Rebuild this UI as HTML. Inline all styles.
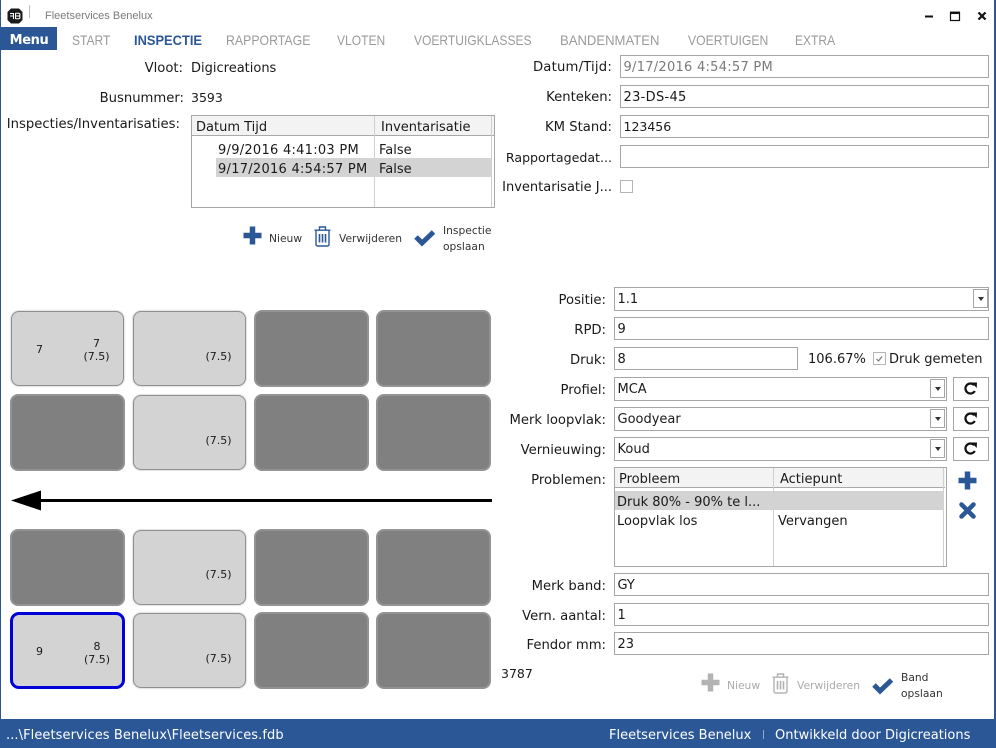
<!DOCTYPE html>
<html><head><meta charset="utf-8"><style>
*{box-sizing:border-box}
html,body{margin:0;padding:0;width:996px;height:748px;overflow:hidden;background:#fff}
body{position:relative;font:13px "DejaVu Sans",sans-serif;color:#1a1a1a}
.t{position:absolute;white-space:nowrap;line-height:18px}
.r{position:absolute;white-space:nowrap;line-height:18px;text-align:right;font-size:13.2px}
.f{position:absolute;border:1px solid #a6a6a6;background:#fff;line-height:22px;padding:1px 0 0 2.5px;white-space:nowrap}
.n{position:absolute;top:32px;font:14px/16px "Liberation Sans",sans-serif;color:#9a9a9a;white-space:nowrap;transform:scaleX(.86);transform-origin:0 0}
.b{position:absolute;width:113px;height:75px;border-radius:8px;background:#d3d3d3;border:1.5px solid #8f8f8f;box-shadow:0 0 1px 1px #e2e2e2;font-size:11px}
.d{background:#808080;border:2px solid #939393;box-shadow:none;width:115px;height:77px}
.b span{position:absolute;white-space:nowrap;line-height:13px;text-align:center}
.dd{position:absolute;width:15px;height:19px;border:1px solid #a6a6a6;background:#fff}
.dd:after{content:"";position:absolute;left:4px;top:7px;border:3px solid transparent;border-top:4px solid #333;border-bottom:0}
.s{position:absolute;font-size:10.7px;line-height:18px;white-space:nowrap;color:#333}
.rb{position:absolute;left:953px;width:36px;height:24px;border:1px solid #a6a6a6;background:#fff}
.dt{letter-spacing:.27px}
svg{position:absolute;overflow:visible}
</style></head><body>

<!-- window edges -->
<div style="position:absolute;left:0;top:0;width:1px;height:748px;background:#2b5797"></div>
<div style="position:absolute;right:0;top:0;width:2px;height:748px;background:#2b5797"></div>

<!-- title -->
<svg style="left:7px;top:8px" width="16" height="16" viewBox="0 0 16 16"><path d="M4 .5h8L15.500 4v8L12 15.500H4L.5 12V4z" fill="#1b1b1b"/><path d="M3 5.500h3.500M3 8h3.500M6.500 5v6M8.500 5v6M8.500 5.200h3q1.500 0 1.500 1.400t-1.500 1.400h-3M8.500 8h3q1.500 0 1.500 1.400t-1.500 1.400h-3" stroke="#fff" stroke-width="1" fill="none"/></svg>
<div style="position:absolute;left:29px;top:5px;width:1px;height:13px;background:#bdbdbd"></div>
<div class="t" style="left:45px;top:8px;font:11px/16px 'Liberation Sans',sans-serif;color:#7b7b7b">Fleetservices Benelux</div>
<svg style="left:924px;top:10px" width="66" height="14" viewBox="0 0 66 14">
<path d="M1 6.500h8" stroke="#111" stroke-width="2"/>
<path d="M26.500 2.500h9v8h-9z" stroke="#111" stroke-width="1.200" fill="none"/><path d="M26 2.800h10" stroke="#111" stroke-width="2.500"/>
<path d="M54.500 2.500l7 7M61.500 2.500l-7 7" stroke="#111" stroke-width="2.200"/></svg>

<!-- nav -->
<div style="position:absolute;left:1px;top:27px;width:56px;height:23px;background:#2b5797;color:#fff;font:bold 13px/27px 'DejaVu Sans',sans-serif;text-align:center;letter-spacing:-.4px">Menu</div>
<div class="n" style="left:72px">START</div>
<div class="n" style="left:134px;color:#2b5797;font-weight:bold;transform:scaleX(.92)">INSPECTIE</div>
<div class="n" style="left:226px;transform:scaleX(.88)">RAPPORTAGE</div>
<div class="n" style="left:337px">VLOTEN</div>
<div class="n" style="left:414px">VOERTUIGKLASSES</div>
<div class="n" style="left:560px;transform:scaleX(.935)">BANDENMATEN</div>
<div class="n" style="left:688px;transform:scaleX(.87)">VOERTUIGEN</div>
<div class="n" style="left:795px">EXTRA</div>

<!-- top left -->
<div class="r" style="right:813px;top:60px">Vloot:</div>
<div class="t" style="left:191px;top:60px">Digicreations</div>
<div class="r" style="right:812px;top:90px">Busnummer:</div>
<div class="t" style="left:191px;top:90px;font-size:12.500px;line-height:16px">3593</div>
<div class="r" style="right:816px;top:116px">Inspecties/Inventarisaties:</div>

<div style="position:absolute;left:191px;top:115px;width:304px;height:93px;border:1px solid #a6a6a6;background:#fff"></div>
<div style="position:absolute;left:192px;top:116px;width:302px;height:20px;background:#f3f3f3;border-bottom:1px solid #a9a9a9"></div>
<div style="position:absolute;left:374px;top:116px;width:1px;height:91px;background:#cfcfcf"></div>
<div style="position:absolute;left:491px;top:116px;width:1px;height:91px;background:#cfcfcf"></div>
<div style="position:absolute;left:216px;top:158px;width:276px;height:19px;background:#d3d3d3"></div>
<div class="t" style="left:196px;top:119px">Datum Tijd</div>
<div class="t" style="left:381px;top:119px">Inventarisatie</div>
<div class="t dt" style="left:218px;top:142px">9/9/2016 4:41:03 PM</div>
<div class="t" style="left:379px;top:142px">False</div>
<div class="t dt" style="left:218px;top:161px">9/17/2016 4:54:57 PM</div>
<div class="t" style="left:379px;top:161px">False</div>

<!-- top actions -->
<svg style="left:243px;top:226px" width="19" height="19" viewBox="0 0 19 19"><path d="M9.500 .5v18M.5 9.500h18" stroke="#2b5797" stroke-width="5.500"/></svg>
<div class="s" style="left:269px;top:230px">Nieuw</div>
<svg style="left:314px;top:226px" width="17" height="21" viewBox="0 0 17 21" fill="none" stroke="#2b5797" stroke-width="1.400"><path d="M2 4.500v14a1.500 1.500 0 0 0 1.500 1.500h10a1.500 1.500 0 0 0 1.500-1.500v-14M.5 4.200h16M5.500 4V1h6v3"/><path d="M5.500 8v8.500M8.500 8v8.500M11.500 8v8.500" stroke-width="1.600"/></svg>
<div class="s" style="left:339px;top:230px">Verwijderen</div>
<svg style="left:413px;top:226px" width="23" height="21" viewBox="0 0 23 21"><path d="M3 11l6 6L20.500 6" fill="none" stroke="#2b5797" stroke-width="5"/></svg>
<div class="s" style="left:443px;top:222px">Inspectie</div>
<div class="s" style="left:443px;top:238px">opslaan</div>

<!-- top right form -->
<div class="r" style="right:384px;top:59px;letter-spacing:.2px">Datum/Tijd:</div>
<div class="f dt" style="left:620px;top:55px;width:369px;height:23px;color:#7a7a7a">9/17/2016 4:54:57 PM</div>
<div class="r" style="right:384px;top:89px">Kenteken:</div>
<div class="f" style="left:620px;top:85px;width:369px;height:23px;letter-spacing:.3px">23-DS-45</div>
<div class="r" style="right:384px;top:119px">KM Stand:</div>
<div class="f" style="left:620px;top:115px;width:369px;height:23px;font-size:12.500px;line-height:20px">123456</div>
<div class="r" style="right:384px;top:149px;font-size:12.600px">Rapportagedat...</div>
<div class="f" style="left:620px;top:145px;width:369px;height:23px"></div>
<div class="r" style="right:384px;top:179px;font-size:13px">Inventarisatie J...</div>
<div style="position:absolute;left:620px;top:180px;width:13px;height:13px;border:1px solid #b5b5b5"></div>

<!-- buttons grid -->
<div class="b" style="left:11px;top:311px"><span style="left:24px;top:31px">7</span><span style="left:70.500px;top:25px;width:28px">7<br>(7.5)</span></div>
<div class="b" style="left:133px;top:311px"><span style="left:70.500px;top:38px;width:28px">(7.5)</span></div>
<div class="b d" style="left:254px;top:310px"></div>
<div class="b d" style="left:376px;top:310px"></div>
<div class="b d" style="left:10px;top:394px"></div>
<div class="b" style="left:133px;top:395px"><span style="left:70.500px;top:38px;width:28px">(7.5)</span></div>
<div class="b d" style="left:254px;top:394px"></div>
<div class="b d" style="left:376px;top:394px"></div>

<svg style="left:11px;top:490px" width="482" height="21" viewBox="0 0 482 21"><path d="M0 10.500L30 .5v20z" fill="#000"/><path d="M28 10.500h453" stroke="#000" stroke-width="3"/></svg>

<div class="b d" style="left:10px;top:529px"></div>
<div class="b" style="left:133px;top:530px"><span style="left:70.500px;top:37px;width:28px">(7.5)</span></div>
<div class="b d" style="left:254px;top:529px"></div>
<div class="b d" style="left:376px;top:529px"></div>
<div class="b" style="left:10px;top:612px;width:115px;border:3px solid #0000d8;box-shadow:none;height:77px;border-radius:9px"><span style="left:23px;top:30px">9</span><span style="left:70px;top:25px;width:28px">8<br>(7.5)</span></div>
<div class="b" style="left:133px;top:613px"><span style="left:70.500px;top:38px;width:28px">(7.5)</span></div>
<div class="b d" style="left:254px;top:612px"></div>
<div class="b d" style="left:376px;top:612px"></div>

<!-- lower right form -->
<div class="r" style="right:390px;top:292px">Positie:</div>
<div class="f" style="left:614px;top:287px;width:375px;height:24px">1.1</div>
<div class="dd" style="left:973px;top:289px"></div>
<div class="r" style="right:390px;top:322px">RPD:</div>
<div class="f" style="left:614px;top:317px;width:375px;height:23px">9</div>
<div class="r" style="right:390px;top:352px">Druk:</div>
<div class="f" style="left:614px;top:347px;width:184px;height:23px">8</div>
<div class="t" style="left:808px;top:351px">106.67%</div>
<div style="position:absolute;left:873px;top:352px;width:13px;height:13px;border:1px solid #b5b5b5"></div>
<svg style="left:873px;top:352px" width="13" height="13" viewBox="0 0 13 13"><path d="M3.500 7l2 2 3.500-4.500" fill="none" stroke="#777" stroke-width="1.200"/></svg>
<div class="t" style="left:889px;top:351px">Druk gemeten</div>

<div class="r" style="right:390px;top:382px">Profiel:</div>
<div class="f" style="left:614px;top:377px;width:333px;height:24px">MCA</div>
<div class="dd" style="left:930px;top:379px"></div>
<div class="rb" style="top:377px"></div>
<div class="r" style="right:390px;top:412px">Merk loopvlak:</div>
<div class="f" style="left:614px;top:407px;width:333px;height:24px">Goodyear</div>
<div class="dd" style="left:930px;top:409px"></div>
<div class="rb" style="top:407px"></div>
<div class="r" style="right:390px;top:442px">Vernieuwing:</div>
<div class="f" style="left:614px;top:437px;width:333px;height:24px">Koud</div>
<div class="dd" style="left:930px;top:439px"></div>
<div class="rb" style="top:437px"></div>
<svg style="left:963px;top:381px" width="15" height="15" viewBox="0 0 15 15"><path d="M11.200 4.200A5 5 0 1 0 11.800 10" fill="none" stroke="#111" stroke-width="2.200"/><path d="M8.500 1.500l5.500 0-.3 5.500z" fill="#111"/></svg>
<svg style="left:963px;top:411px" width="15" height="15" viewBox="0 0 15 15"><path d="M11.200 4.200A5 5 0 1 0 11.800 10" fill="none" stroke="#111" stroke-width="2.200"/><path d="M8.500 1.500l5.500 0-.3 5.500z" fill="#111"/></svg>
<svg style="left:963px;top:441px" width="15" height="15" viewBox="0 0 15 15"><path d="M11.200 4.200A5 5 0 1 0 11.800 10" fill="none" stroke="#111" stroke-width="2.200"/><path d="M8.500 1.500l5.500 0-.3 5.500z" fill="#111"/></svg>

<!-- problem list -->
<div class="r" style="right:390px;top:472px">Problemen:</div>
<div style="position:absolute;left:614px;top:467px;width:333px;height:100px;border:1px solid #a6a6a6;background:#fff"></div>
<div style="position:absolute;left:615px;top:468px;width:330px;height:20px;background:#f3f3f3;border-bottom:1px solid #a9a9a9"></div>
<div style="position:absolute;left:773px;top:468px;width:1px;height:98px;background:#cfcfcf"></div>
<div style="position:absolute;left:943px;top:468px;width:1px;height:98px;background:#cfcfcf"></div>
<div style="position:absolute;left:615px;top:491px;width:329px;height:19px;background:#d3d3d3"></div>
<div class="t" style="left:619px;top:471px">Probleem</div>
<div class="t" style="left:780px;top:471px">Actiepunt</div>
<div class="t" style="left:617px;top:494px">Druk 80% - 90% te l...</div>
<div class="t" style="left:617px;top:513px">Loopvlak los</div>
<div class="t" style="left:778px;top:513px">Vervangen</div>
<svg style="left:958px;top:471px" width="19" height="19" viewBox="0 0 19 19"><path d="M9.500 .5v18M.5 9.500h18" stroke="#2b5797" stroke-width="5.500"/></svg>
<svg style="left:959px;top:502px" width="17" height="17" viewBox="0 0 17 17"><path d="M2.500 2.500l12 12M14.500 2.500l-12 12" stroke="#2b5797" stroke-width="4.500" stroke-linecap="round"/></svg>

<div class="r" style="right:390px;top:578px">Merk band:</div>
<div class="f" style="left:614px;top:573px;width:375px;height:23px">GY</div>
<div class="r" style="right:390px;top:608px">Vern. aantal:</div>
<div class="f" style="left:614px;top:603px;width:375px;height:23px">1</div>
<div class="r" style="right:390px;top:637px">Fendor mm:</div>
<div class="f" style="left:614px;top:632px;width:375px;height:23px">23</div>
<div class="t" style="left:501px;top:666px;font-size:12.500px;line-height:16px">3787</div>

<!-- bottom actions -->
<svg style="left:701px;top:673px" width="19" height="19" viewBox="0 0 19 19"><path d="M9.500 .5v18M.5 9.500h18" stroke="#b3b3b3" stroke-width="5.500"/></svg>
<div class="s" style="left:727px;top:677px;color:#aaa">Nieuw</div>
<svg style="left:772px;top:673px" width="17" height="21" viewBox="0 0 17 21" fill="none" stroke="#b3b3b3" stroke-width="1.400"><path d="M2 4.500v14a1.500 1.500 0 0 0 1.500 1.500h10a1.500 1.500 0 0 0 1.500-1.500v-14M.5 4.200h16M5.500 4V1h6v3"/><path d="M5.500 8v8.500M8.500 8v8.500M11.500 8v8.500" stroke-width="1.600"/></svg>
<div class="s" style="left:797px;top:677px;color:#aaa">Verwijderen</div>
<svg style="left:871px;top:674px" width="23" height="21" viewBox="0 0 23 21"><path d="M3 11l6 6L20.500 6" fill="none" stroke="#2b5797" stroke-width="5"/></svg>
<div class="s" style="left:901px;top:669px">Band</div>
<div class="s" style="left:901px;top:685px">opslaan</div>

<!-- status bar -->
<div style="position:absolute;left:0;top:719px;width:996px;height:29px;background:#2b5797"></div>
<div class="t" style="left:6px;top:727px;color:#fff;letter-spacing:.08px">...\Fleetservices Benelux\Fleetservices.fdb</div>
<div class="t" style="left:609px;top:727px;color:#fff">Fleetservices Benelux</div>
<div style="position:absolute;left:763px;top:730px;width:1px;height:9px;background:#8fa8cf"></div>
<div class="t" style="left:775px;top:727px;color:#fff">Ontwikkeld door Digicreations</div>
</body></html>
